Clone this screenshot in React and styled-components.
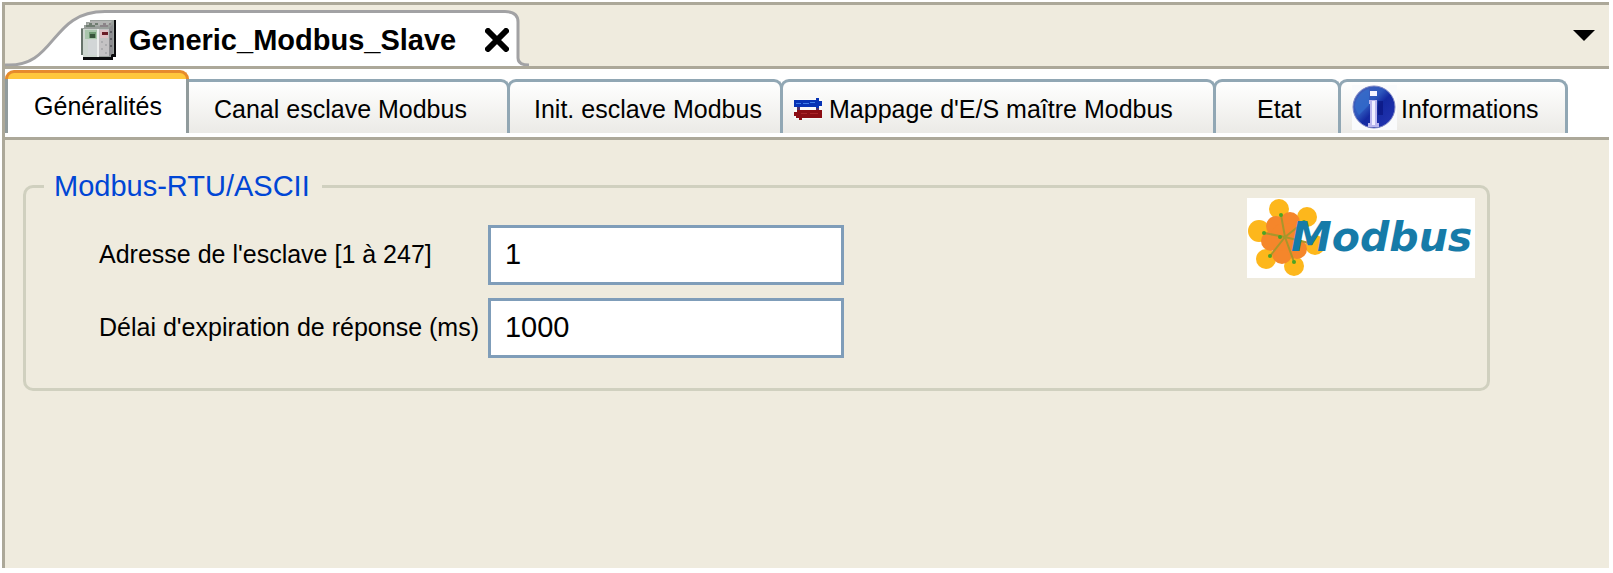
import React, { useState } from 'react';
import styled, { createGlobalStyle } from 'styled-components';

const GlobalStyle = createGlobalStyle`
  * {
    box-sizing: border-box;
  }
  body {
    margin: 0;
    background: #ffffff;
    color: #000000;
    font-family: 'Liberation Sans', Arial, Helvetica, sans-serif;
  }
`;

const Frame = styled.div`
  display: flex;
  flex-direction: column;
  min-height: calc(100vh - 7px);
  margin: 2px 4px 5px 2px;
  border-top: 3px solid #aca899;
  border-left: 3px solid #aca899;
  background: #efebde;
`;

const DocumentBar = styled.header`
  display: flex;
  justify-content: space-between;
  padding-top: 5px;
  border-bottom: 3px solid #aca899;
`;

const DocumentTab = styled.div`
  display: flex;
  height: 56px;
`;

const TabEdge = styled.svg`
  flex: none;
  display: block;
`;

const DocumentTitle = styled.div`
  position: relative;
  display: flex;
  align-items: center;
  margin: 0 -8px 0 -24px;
`;

const DocumentFill = styled.div`
  display: flex;
  border-top: 3px solid #a2a2a4;
  background: #ffffff;
`;

const DocumentName = styled.h1`
  margin: 0 29px 0 13px;
  font-size: 29px;
  line-height: 34px;
  font-weight: 700;
  white-space: nowrap;
`;

const IconButton = styled.button`
  display: flex;
  align-items: center;
  justify-content: center;
  padding: 0;
  border: 0;
  background: none;
  cursor: pointer;
`;

const MenuButton = styled(IconButton)`
  width: 30px;
  height: 50px;
  margin-right: 10px;
`;

const TabStrip = styled.div`
  display: flex;
  align-items: flex-end;
  padding: 1px 0 4px;
  border-bottom: 3px solid #aca899;
  background: #ffffff;
`;

const Tab = styled.button`
  display: flex;
  align-items: center;
  gap: ${(props) => props.$gap || 0}px;
  width: ${(props) => props.$width}px;
  height: 54px;
  margin-left: -3px;
  padding: 3px 0 0 ${(props) => props.$indent}px;
  border: 3px solid #91a7b4;
  border-bottom: 0;
  border-radius: 9px 9px 0 0;
  background: linear-gradient(#ffffff, #ebeae6);
  color: inherit;
  font-family: inherit;
  font-size: 25px;
  line-height: 29px;
  white-space: nowrap;
  cursor: pointer;
`;

const ActiveTab = styled.button`
  position: relative;
  width: ${(props) => props.$width}px;
  padding: 0;
  border: 0;
  background: none;
  color: inherit;
  font-family: inherit;
  font-size: 25px;
  line-height: 54px;
  white-space: nowrap;

  & + ${Tab} {
    border-top-left-radius: 0;
  }
`;

const ActiveCap = styled.span`
  display: block;
  height: 9px;
  border: 3px solid #e68b2c;
  border-bottom: 0;
  border-radius: 9px 9px 0 0;
  background: #ffc73c;
`;

const ActiveLabel = styled.span`
  display: block;
  height: 54px;
  padding-left: 2px;
  border: 3px solid #919b9c;
  border-width: 0 3px;
  background: #ffffff;
`;

const Panel = styled.main`
  flex: 1;
  padding: 30px 119px 30px 18px;
`;

const Group = styled.fieldset`
  min-width: 0;
  margin: 0;
  padding: 0 12px 30px 73px;
  border: 3px solid #d0d0bf;
  border-radius: 10px;
`;

const GroupLegend = styled.legend`
  margin-left: -55px;
  padding: 0 12px 0 10px;
  color: #0046d5;
  font-size: 29px;
  line-height: 33px;
`;

const GroupContent = styled.div`
  display: flex;
  align-items: flex-start;
  justify-content: space-between;
`;

const Fields = styled.div`
  display: grid;
  grid-template-columns: max-content 356px;
  gap: 13px 9px;
  padding-top: 22px;
`;

const FieldLabel = styled.label`
  align-self: center;
  padding-bottom: 2px;
  font-size: 25px;
  line-height: 29px;
`;

const FieldInput = styled.input`
  width: 100%;
  height: 60px;
  padding: 0 14px 2px;
  border: 3px solid #7f9db9;
  border-radius: 0;
  outline: none;
  background: #ffffff;
  color: inherit;
  font-family: inherit;
  font-size: 29px;
`;

const BrandLogo = styled.svg`
  flex: none;
  margin-top: -5px;
`;

const DeviceIcon = () => (
  <svg width="35" height="40" viewBox="0 0 35 40" aria-hidden="true">
    <path d="M2 36h28V2h2V0h3v37h-3v3H2z" fill="#0b0b0d" />
    <path d="M0 8h3V5h2V2h4V0h24v34h-3v3H2v-2H0z" fill="#9aa09c" />
    <path d="M5 5l5-4h21l-5 5z" fill="#b3b5b3" />
    <path d="M5 5h3V3h3v2h3V3h3v2h-3v2H5z" fill="#6f7d71" />
    <path d="M19 5h3V3h3v2h3V3h2v2h-3v2h-8z" fill="#8b8488" />
    <path d="M0 9h2v26H0z" fill="#66736a" />
    <path d="M2 9h14v28H2z" fill="#cdd6cf" />
    <path d="M4 10h12v9H4z" fill="#a9c6ac" />
    <path d="M7 20h9v15H7z" fill="#d2d6d7" />
    <path d="M8 12h7v6H8z" fill="#6f9a73" />
    <path d="M9 14h5v4H9z" fill="#36543a" />
    <path d="M16 9h2v28h-2z" fill="#eceeed" />
    <path d="M18 9h10v27H18z" fill="#c4c2c4" />
    <path d="M19 10h8v8h-8z" fill="#dfbfc5" />
    <path d="M21 12h6v3h-6z" fill="#6b1a26" />
    <path d="M28 8l4-4v29l-4 4z" fill="#8d8d91" />
    <path d="M29 11h2v2h-2zm0 7h2v2h-2zm0 7h2v2h-2z" fill="#606065" />
    <path d="M20 21h2v2h-2zm4 3h2v2h-2zm-4 4h2v2h-2zm4 4h2v2h-2z" fill="#acacaf" />
  </svg>
);

const CloseIcon = () => (
  <svg width="24" height="24" viewBox="0 0 24 24" aria-hidden="true">
    <path d="M3 3l18 18M21 3L3 21" stroke="#000000" strokeWidth="6" strokeLinecap="round" />
  </svg>
);

const MappingIcon = () => (
  <svg width="28" height="22" viewBox="0 0 28 22" aria-hidden="true">
    <path d="M0 1h28v20H0z" fill="#ffffff" opacity=".45" />
    <path d="M3 8h3v4H3zm19 0h3v4h-3z" fill="#4b3270" />
    <path d="M0 2h22V0h3v3h3v5h-3v2h-3V9H0z" fill="#0733b5" />
    <path d="M2 5h5v1H2zm7 0h6v1H9zm7-1h5v1h-5z" fill="#3f7ce8" />
    <path d="M6 12h22v8H8v2H5v-2H2v-2H0v-4h3v-2z" fill="#8b0c12" />
    <path d="M7 15h6v1H7zm9 0h8v1h-8z" fill="#a92428" />
  </svg>
);

const InfoIcon = () => (
  <svg width="45" height="48" viewBox="0 0 45 48" aria-hidden="true">
    <defs>
      <linearGradient id="infoBall" x1="0" y1="0" x2="1" y2="1">
        <stop offset="0" stopColor="#4a62b8" />
        <stop offset=".4" stopColor="#2d57bd" />
        <stop offset=".55" stopColor="#1429a0" />
        <stop offset="1" stopColor="#2636b4" />
      </linearGradient>
    </defs>
    <path d="M0 0h45v45H0z" fill="#fafbfc" />
    <circle cx="22" cy="22" r="21" fill="url(#infoBall)" stroke="#7d86c4" strokeWidth="1" />
    <path d="M3 22a19 19 0 0 1 14-18v16L7 30a19 19 0 0 1-4-8z" fill="#3472cf" opacity=".6" />
    <path d="M26 16h5v14h-5z" fill="#0a1680" opacity=".7" />
    <path d="M18 6h7v5h-7z" fill="#f5f4ff" />
    <path d="M17 15h8v23h2v4H16v-4h2V19h-1z" fill="#b9b6ee" />
    <path d="M20 16h3v24h-3z" fill="#f0efff" />
  </svg>
);

const ModbusLogo = () => (
  <BrandLogo width="228" height="80" viewBox="0 0 228 80" role="img" aria-label="Modbus">
    <path d="M0 0h228v80H0z" fill="#ffffff" />
    <g fill="#fdb71c">
      <circle cx="32" cy="11" r="10" />
      <circle cx="60" cy="19" r="10" />
      <circle cx="12" cy="33" r="11" />
      <circle cx="19" cy="61" r="10" />
      <circle cx="47" cy="68" r="10" />
      <circle cx="68" cy="47" r="10" />
    </g>
    <g fill="#f5862b">
      <circle cx="29" cy="28" r="10" />
      <circle cx="43" cy="24" r="10" />
      <circle cx="24" cy="43" r="10" />
      <circle cx="35" cy="56" r="10" />
      <circle cx="50" cy="51" r="10" />
      <circle cx="38" cy="39" r="14" />
    </g>
    <path
      d="M38 39L34 17M38 39L57 24M38 39L17 35M38 39L23 58M38 39L47 64M38 39L66 46"
      fill="none"
      stroke="#a9962a"
      strokeWidth="2"
    />
    <g fill="#4ba426">
      <circle cx="34" cy="17" r="2" />
      <circle cx="57" cy="24" r="2" />
      <circle cx="17" cy="35" r="2" />
      <circle cx="33" cy="39" r="2" />
      <circle cx="23" cy="58" r="2" />
      <circle cx="47" cy="64" r="2" />
    </g>
    <text
      x="44"
      y="53"
      fill="#167ba8"
      fontFamily="'DejaVu Sans', Verdana, sans-serif"
      fontSize="41"
      fontWeight="700"
      fontStyle="italic"
    >
      Modbus
    </text>
  </BrandLogo>
);

const tabs = [
  { label: 'Canal esclave Modbus', width: 324, indent: 25 },
  { label: 'Init. esclave Modbus', width: 276, indent: 24 },
  { label: "Mappage d'E/S maître Modbus", width: 436, indent: 11, gap: 7, icon: <MappingIcon /> },
  { label: 'Etat', width: 128, indent: 41 },
  { label: 'Informations', width: 230, indent: 11, gap: 4, icon: <InfoIcon /> },
];

const DocumentHeader = () => (
  <DocumentBar>
    <DocumentTab>
      <TabEdge width="100" height="56" viewBox="0 0 100 56" aria-hidden="true">
        <path d="M0 56C52 56 48 1 100 1V56z" fill="#ffffff" />
        <path d="M0 55C52 58 44 1.5 100 1.5" fill="none" stroke="#a2a2a4" strokeWidth="3" />
      </TabEdge>
      <DocumentFill>
        <DocumentTitle>
          <DeviceIcon />
          <DocumentName>Generic_Modbus_Slave</DocumentName>
          <IconButton type="button" aria-label="Fermer">
            <CloseIcon />
          </IconButton>
        </DocumentTitle>
      </DocumentFill>
      <TabEdge width="30" height="56" viewBox="0 0 30 56" aria-hidden="true">
        <path d="M0 1H4Q17 1 17 12V48Q17 56 28 56H0z" fill="#ffffff" />
        <path d="M0 1.5H4Q17 1.5 17 12V48Q17 55 28 55" fill="none" stroke="#a2a2a4" strokeWidth="3" />
      </TabEdge>
    </DocumentTab>
    <MenuButton type="button" aria-label="Liste des documents">
      <svg width="22" height="11" viewBox="0 0 22 11" aria-hidden="true">
        <path d="M0 0h22L11 11z" fill="#000000" />
      </svg>
    </MenuButton>
  </DocumentBar>
);

const App = () => {
  const [address, setAddress] = useState('1');
  const [timeout, setTimeoutValue] = useState('1000');

  return (
    <>
      <GlobalStyle />
      <Frame>
        <DocumentHeader />
        <TabStrip role="tablist">
          <ActiveTab type="button" role="tab" id="generalTab" aria-selected="true" $width={184}>
            <ActiveCap />
            <ActiveLabel>Généralités</ActiveLabel>
          </ActiveTab>
          {tabs.map((tab) => (
            <Tab
              key={tab.label}
              type="button"
              role="tab"
              aria-selected="false"
              $width={tab.width}
              $indent={tab.indent}
              $gap={tab.gap}
            >
              {tab.icon}
              {tab.label}
            </Tab>
          ))}
        </TabStrip>
        <Panel role="tabpanel" aria-labelledby="generalTab">
          <Group>
            <GroupLegend>Modbus-RTU/ASCII</GroupLegend>
            <GroupContent>
              <Fields>
                <FieldLabel htmlFor="address">Adresse de l'esclave [1 à 247]</FieldLabel>
                <FieldInput id="address" type="text" value={address} onChange={(e) => setAddress(e.target.value)} />
                <FieldLabel htmlFor="timeout">Délai d'expiration de réponse (ms)</FieldLabel>
                <FieldInput id="timeout" type="text" value={timeout} onChange={(e) => setTimeoutValue(e.target.value)} />
              </Fields>
              <ModbusLogo />
            </GroupContent>
          </Group>
        </Panel>
      </Frame>
    </>
  );
};

export default App;
